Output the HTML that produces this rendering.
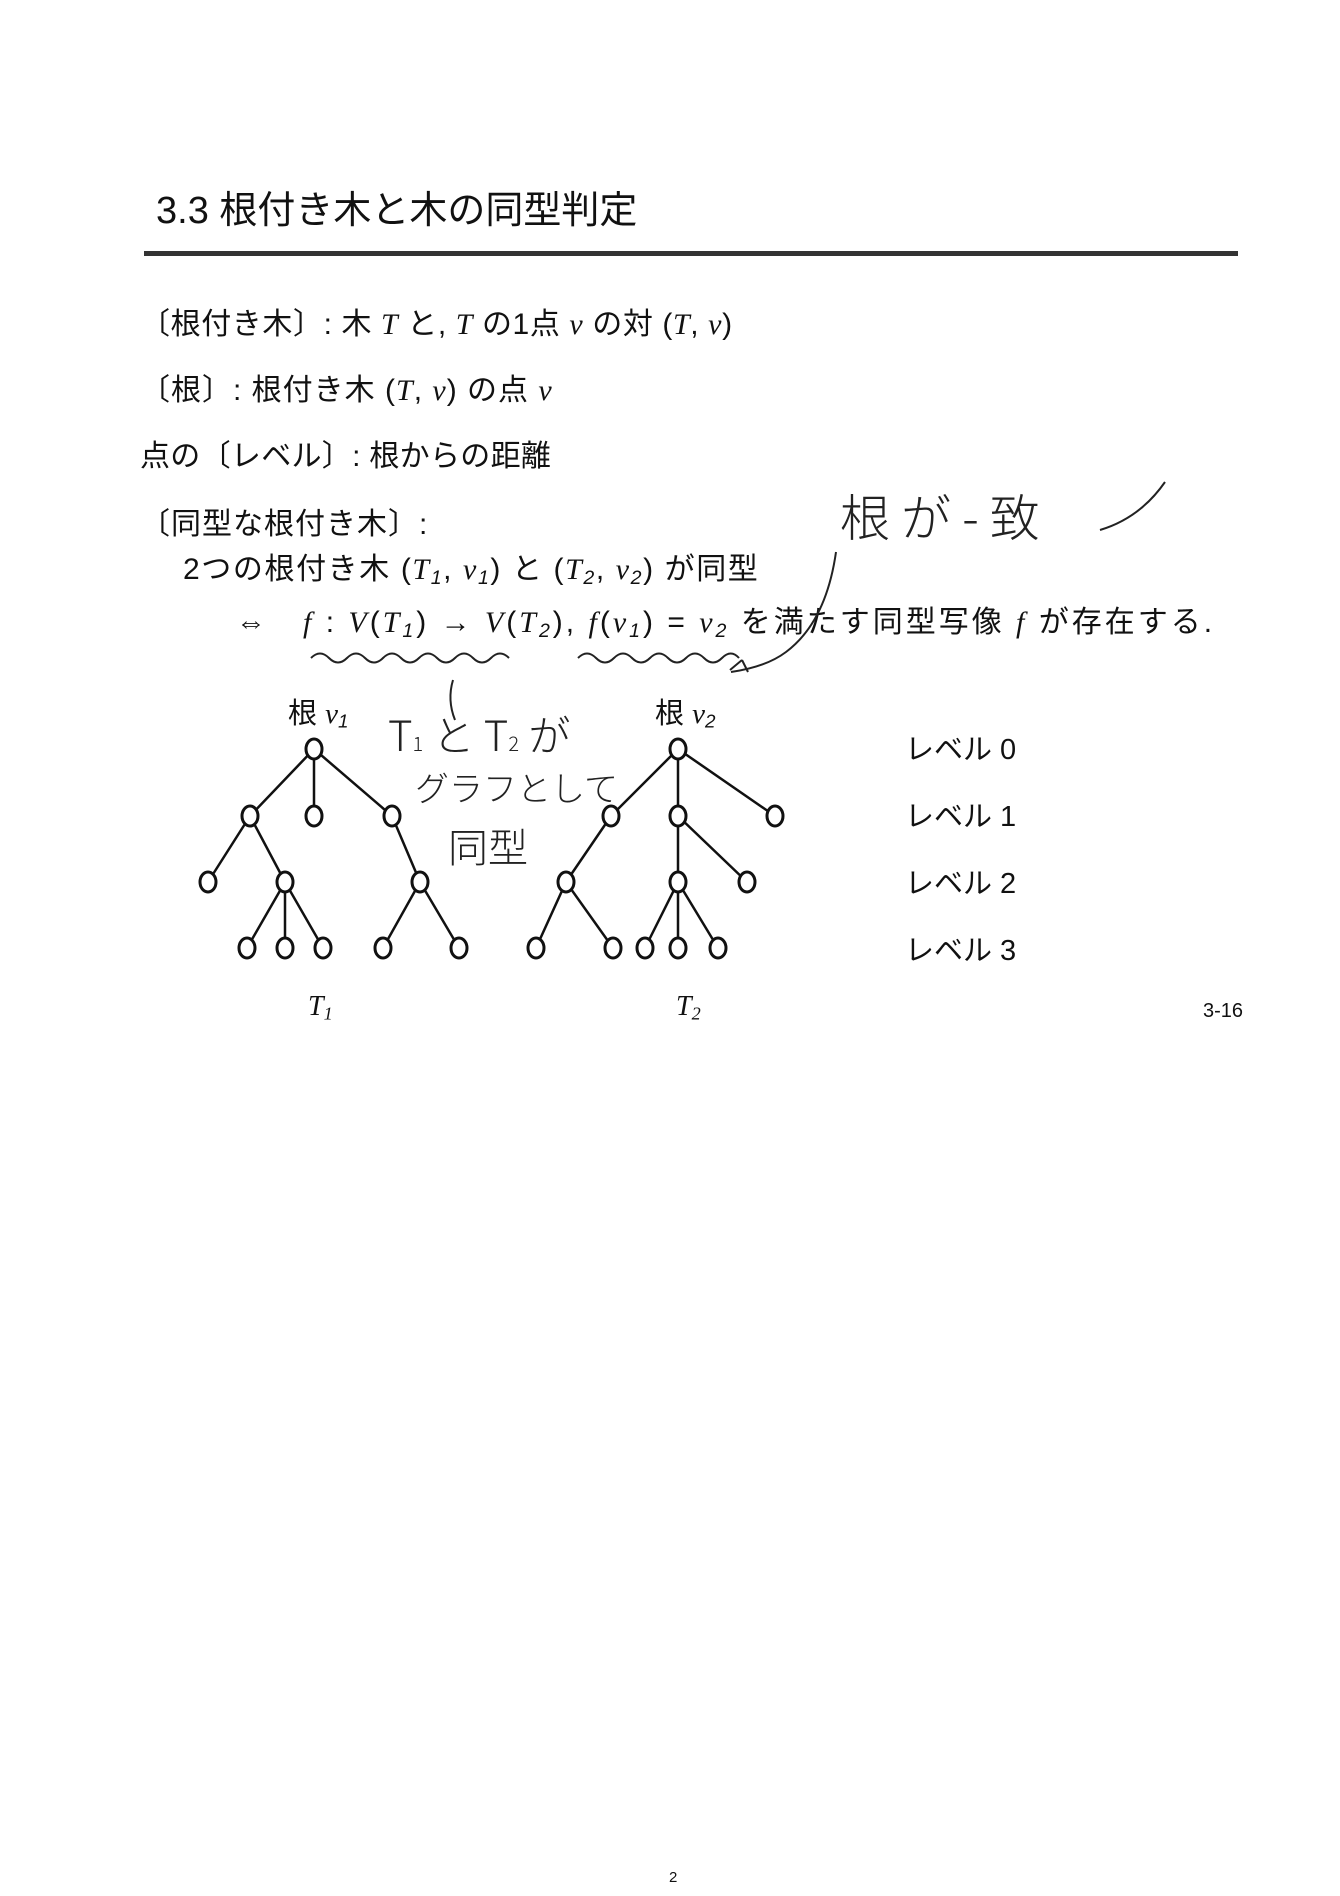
<!DOCTYPE html>
<html><head><meta charset="utf-8">
<style>
body{margin:0;background:#fff;}
#p{position:relative;width:1340px;height:1896px;background:#fff;overflow:hidden;font-family:"Liberation Sans","Noto Sans CJK JP",sans-serif;color:#111;}
.t{position:absolute;white-space:nowrap;line-height:1;}
.m{font-family:"Liberation Serif","Noto Serif CJK SC",serif;font-style:italic;}
sub{font-size:0.65em;vertical-align:-0.25em;font-style:italic;}
.h{font-family:"Noto Sans CJK JP",sans-serif;font-weight:300;color:#222;}
</style></head><body><div id="p">
<div class="t" style="left:156px;top:192px;font-size:38px;">3.3 根付き木と木の同型判定</div>
<div style="position:absolute;left:144px;top:251px;width:1094px;height:5px;background:#333;"></div>
<div class="t" style="left:140px;top:310px;font-size:30px;letter-spacing:0.6px;">〔根付き木〕: 木 <span class="m">T</span> と, <span class="m">T</span> の1点 <span class="m">v</span> の対 (<span class="m">T</span>, <span class="m">v</span>)</div>
<div class="t" style="left:140px;top:376px;font-size:30px;letter-spacing:1px;">〔根〕: 根付き木 (<span class="m">T</span>, <span class="m">v</span>) の点 <span class="m">v</span></div>
<div class="t" style="left:140px;top:442px;font-size:30px;letter-spacing:0.3px;">点の〔レベル〕: 根からの距離</div>
<div class="t" style="left:140px;top:510px;font-size:30px;letter-spacing:1px;">〔同型な根付き木〕:</div>
<div class="t" style="left:183px;top:555px;font-size:30px;letter-spacing:1.6px;">2つの根付き木 (<span class="m">T</span><sub>1</sub>, <span class="m">v</span><sub>1</sub>) と (<span class="m">T</span><sub>2</sub>, <span class="m">v</span><sub>2</sub>) が同型</div>
<div class="t" style="left:236px;top:608px;font-size:30px;letter-spacing:3px;">⇔&nbsp;&nbsp; <span class="m">f</span> : <span class="m">V</span>(<span class="m">T</span><sub>1</sub>) → <span class="m">V</span>(<span class="m">T</span><sub>2</sub>), <span class="m">f</span>(<span class="m">v</span><sub>1</sub>) = <span class="m">v</span><sub>2</sub> を満たす同型写像 <span class="m">f</span> が存在する.</div>

<div class="t h" style="left:840px;top:490px;font-size:50px;">根 が - 致</div>
<div class="t h" style="left:388px;top:713px;font-size:42px;">T<span style="font-size:20px">1</span> と T<span style="font-size:20px">2</span> が</div>
<div class="t h" style="left:415px;top:770px;font-size:34px;">グラフとして</div>
<div class="t h" style="left:448px;top:825px;font-size:40px;">同型</div>

<svg style="position:absolute;left:0;top:0" width="1340" height="1896">
<g fill="none" stroke="#222" stroke-width="2">
<path d="M311 658 q9 -9 18 0 t18 0 t18 0 t18 0 t18 0 t18 0 t18 0 t18 0 t18 0 t18 0 t18 0"/>
<path d="M578 658 q9 -9 18 0 t18 0 t18 0 t18 0 t18 0 t18 0 t18 0 t18 0 t17 0"/>
<path d="M1100 530 q40 -12 65 -48"/>
<path d="M836 552 q-10 70 -50 100 q-20 15 -55 20"/>
<path d="M742 660 l-12 10 M742 660 l6 12"/>
<path d="M453 680 q-6 20 2 40"/>
</g>
<g stroke="#111" stroke-width="2.5" fill="none">
<path d="M314 749 L250 816 M314 749 L314 816 M314 749 L392 816 M250 816 L208 882 M250 816 L285 882 M392 816 L420 882 M285 882 L247 948 M285 882 L285 948 M285 882 L323 948 M420 882 L383 948 M420 882 L459 948"/>
<path d="M678 749 L611 816 M678 749 L678 816 M678 749 L775 816 M611 816 L566 882 M678 816 L678 882 M678 816 L747 882 M566 882 L536 948 M566 882 L613 948 M678 882 L645 948 M678 882 L678 948 M678 882 L718 948"/>
</g>
<g stroke="#111" stroke-width="3" fill="#fff">
<ellipse cx="314" cy="749" rx="8" ry="10"/>
<ellipse cx="250" cy="816" rx="8" ry="10"/><ellipse cx="314" cy="816" rx="8" ry="10"/><ellipse cx="392" cy="816" rx="8" ry="10"/>
<ellipse cx="208" cy="882" rx="8" ry="10"/><ellipse cx="285" cy="882" rx="8" ry="10"/><ellipse cx="420" cy="882" rx="8" ry="10"/>
<ellipse cx="247" cy="948" rx="8" ry="10"/><ellipse cx="285" cy="948" rx="8" ry="10"/><ellipse cx="323" cy="948" rx="8" ry="10"/><ellipse cx="383" cy="948" rx="8" ry="10"/><ellipse cx="459" cy="948" rx="8" ry="10"/>
<ellipse cx="678" cy="749" rx="8" ry="10"/>
<ellipse cx="611" cy="816" rx="8" ry="10"/><ellipse cx="678" cy="816" rx="8" ry="10"/><ellipse cx="775" cy="816" rx="8" ry="10"/>
<ellipse cx="566" cy="882" rx="8" ry="10"/><ellipse cx="678" cy="882" rx="8" ry="10"/><ellipse cx="747" cy="882" rx="8" ry="10"/>
<ellipse cx="536" cy="948" rx="8" ry="10"/><ellipse cx="613" cy="948" rx="8" ry="10"/><ellipse cx="645" cy="948" rx="8" ry="10"/><ellipse cx="678" cy="948" rx="8" ry="10"/><ellipse cx="718" cy="948" rx="8" ry="10"/>
</g>
</svg>
<div class="t" style="left:288px;top:700px;font-size:29px;">根 <span class="m">v</span><sub>1</sub></div>
<div class="t" style="left:655px;top:700px;font-size:29px;">根 <span class="m">v</span><sub>2</sub></div>
<div class="t" style="left:905px;top:736px;font-size:29px;">レベル 0</div>
<div class="t" style="left:905px;top:803px;font-size:29px;">レベル 1</div>
<div class="t" style="left:905px;top:870px;font-size:29px;">レベル 2</div>
<div class="t" style="left:905px;top:937px;font-size:29px;">レベル 3</div>
<div class="t m" style="left:308px;top:993px;font-size:28px;">T<sub>1</sub></div>
<div class="t m" style="left:676px;top:993px;font-size:28px;">T<sub>2</sub></div>
<div class="t" style="left:1203px;top:1001px;font-size:20px;">3-16</div>
<div class="t" style="left:669px;top:1870px;font-size:15px;">2</div>
</div></body></html>
